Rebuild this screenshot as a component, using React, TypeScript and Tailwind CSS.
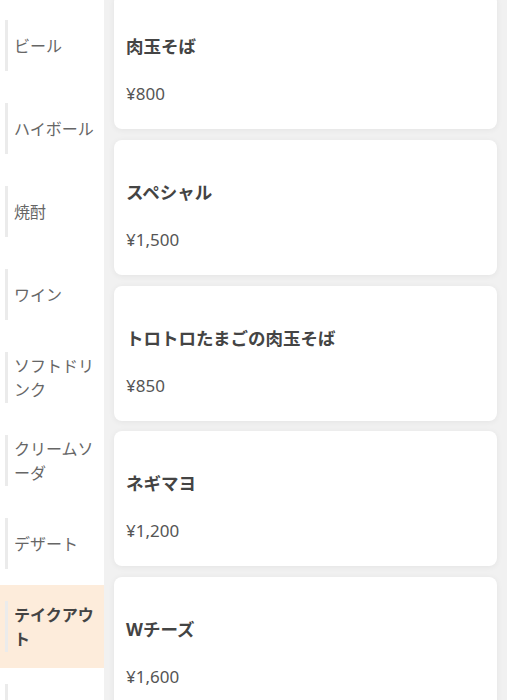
import React from 'react';

const categories = [
    'ビール',
    'ハイボール',
    '焼酎',
    'ワイン',
    'ソフトドリンク',
    'クリームソーダ',
    'デザート',
    'テイクアウト',
    '',
];

const items = [
    { name: '肉玉そば', price: '¥800' },
    { name: 'スペシャル', price: '¥1,500' },
    { name: 'トロトロたまごの肉玉そば', price: '¥850' },
    { name: 'ネギマヨ', price: '¥1,200' },
    { name: 'Wチーズ', price: '¥1,600' },
];

const App: React.FC = () => {
    const active = 'テイクアウト';

    return (
        <div
            className="flex h-[700px] w-[507px] overflow-hidden bg-white"
            style={{ fontFamily: '"Noto Sans", "Noto Sans CJK JP", sans-serif' }}
        >
            {/* Category sidebar */}
            <div className="w-[104px] shrink-0 bg-white pt-[4px]">
                {categories.map((cat, i) => (
                    <div
                        key={i}
                        className={
                            cat === active
                                ? 'h-[83px] py-[16px] bg-[#fdecdb]'
                                : 'h-[83px] py-[16px]'
                        }
                    >
                        <div className="ml-[5px] flex h-[51px] items-center border-l-[3px] border-[#ebebeb] pl-[6px] pr-[4px]">
                            <span
                                className={
                                    cat === active
                                        ? 'text-[16px] leading-[24px] font-bold text-[#444]'
                                        : 'text-[16px] leading-[24px] text-[#666]'
                                }
                            >
                                {cat}
                            </span>
                        </div>
                    </div>
                ))}
            </div>

            {/* Menu list */}
            <div className="flex-1 bg-[#f1f1f1] px-[10px]">
                <div className="mt-[-5.7px] flex flex-col gap-[10.7px]">
                    {items.map(item => (
                        <div
                            key={item.name}
                            className="h-[135px] shrink-0 rounded-[8px] bg-white px-[12px] shadow-[0_1px_6px_rgba(0,0,0,0.06)]"
                        >
                            <div className="pt-[39px] text-[17.5px] leading-[26px] font-bold text-[#444]">
                                {item.name}
                            </div>
                            <div className="pt-[22px] text-[17px] leading-[26px] text-[#555]">
                                {item.price}
                            </div>
                        </div>
                    ))}
                </div>
            </div>
        </div>
    );
};

export default App;
